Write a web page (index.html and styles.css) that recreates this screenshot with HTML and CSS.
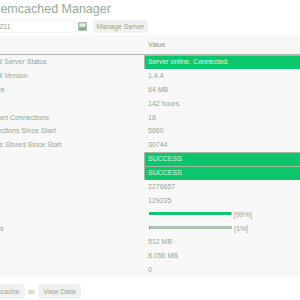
FILE: index.html
```html
<!DOCTYPE html>
<html lang="en">
<head>
  <meta charset="UTF-8">
  <title>Memcached Manager</title>
  <link rel="stylesheet" href="styles.css">
</head>
<body>
  <div class="page">
    <!-- Header -->
    <h1 class="title">Memcached Manager</h1>
    <form class="server-bar">
      <input class="server-input" type="text" value="127.0.0.1:11211">
      <span class="server-icon">
        <svg width="9" height="9" viewBox="0 0 9 9">
          <rect x="0" y="0" width="9" height="9" rx="1" fill="#a3c0a8"/>
          <rect x="1.5" y="1.5" width="6" height="3" fill="#e9f1eb"/>
          <rect x="1.5" y="6" width="6" height="1.5" fill="#7e9e85"/>
        </svg>
      </span>
      <button type="button" class="btn">Manage Server</button>
    </form>
    <!-- Stats table -->
    <table class="stats">
      <thead>
        <tr><th class="label"></th><th class="value">Value</th></tr>
      </thead>
      <tbody>
        <tr><td class="label">Full Server Status</td><td class="value ok">Server online. Connected.</td></tr>
        <tr><td class="label">Full Version</td><td class="value">1.4.4</td></tr>
        <tr><td class="label">Size</td><td class="value">64 MB</td></tr>
        <tr><td class="label">Up</td><td class="value">142 hours</td></tr>
        <tr><td class="label">Open Connections</td><td class="value">18</td></tr>
        <tr><td class="label">Elections Since Start</td><td class="value">5660</td></tr>
        <tr><td class="label">Hits Stored Since Start</td><td class="value">30744</td></tr>
        <tr><td class="label"></td><td class="value ok">SUCCESS</td></tr>
        <tr><td class="label"></td><td class="value ok">SUCCESS</td></tr>
        <tr><td class="label"></td><td class="value">2276657</td></tr>
        <tr><td class="label"></td><td class="value">129235</td></tr>
        <tr><td class="label">Hit</td><td class="value"><span class="bar hit"><span class="bar-fill" style="width: 99%"></span></span>[99%]</td></tr>
        <tr><td class="label">Ops</td><td class="value"><span class="bar"><span class="bar-fill" style="width: 1%"></span></span>[1%]</td></tr>
        <tr><td class="label"></td><td class="value">512 MB</td></tr>
        <tr><td class="label"></td><td class="value">8.056 MB</td></tr>
        <tr><td class="label"></td><td class="value">0</td></tr>
      </tbody>
    </table>
    <!-- Actions -->
    <div class="actions">
      <button type="button" class="btn">Flush Memcache</button>
      <span class="or">or</span>
      <button type="button" class="btn">View Data</button>
    </div>
  </div>
</body>
</html>
```

FILE: styles.css
```css
/* Reset */
* {
  margin: 0;
  padding: 0;
  box-sizing: border-box;
}
body {
  font-family: 'Liberation Sans', Arial, sans-serif;
  background: #fff;
  color: #8fa893;
  overflow: hidden;
}
.page {
  margin-left: -50px;
  width: 368px;
}
/* Header */
.title {
  height: 17px;
  padding: 1px 0 0 40px;
  font-size: 12.5px;
  font-weight: normal;
  line-height: 16px;
  color: #93ab97;
}
.server-bar {
  display: flex;
  align-items: center;
  height: 13px;
  margin-top: 3px;
}
.server-input {
  width: 126px;
  height: 13px;
  padding: 0 0 0 10px;
  border: 1px solid #f6f6f6;
  background: #fff;
  font-family: inherit;
  font-size: 7px;
  color: #8fa893;
  outline: none;
}
.server-icon {
  display: block;
  width: 9px;
  height: 9px;
  margin-left: 2px;
}
.server-icon svg {
  display: block;
}
.btn {
  height: 13px;
  padding: 0 3.5px;
  border: none;
  border-radius: 4px;
  background: #f1f1f1;
  font-family: inherit;
  font-size: 7px;
  line-height: 13px;
  color: #8fa893;
}
.server-bar .btn {
  margin-left: 6px;
}
/* Stats table */
.stats {
  width: 330px;
  margin: 2px 0 0 38px;
  table-layout: fixed;
  border-collapse: separate;
  border-spacing: 0;
  background: #f8f8f8;
  font-size: 7px;
}
.stats th {
  height: 20px;
  padding: 0 3px;
  border-bottom: 1px solid #a9bcab;
  text-align: left;
  font-weight: normal;
  color: #88a08c;
}
.stats th.label, .stats td.label {
  width: 156px;
}
.stats td {
  padding: 0 3px;
  border-top: 1px solid transparent;
  line-height: 12.87px;
  white-space: nowrap;
  overflow: hidden;
}
.stats .value {
  border-left: 1px solid transparent;
}
.stats td.ok {
  background: #0bc66b;
  color: #e4efe7;
  border-top-color: #a9b8ab;
  border-left-color: #a9b8ab;
}
/* Percentage bars */
.bar {
  display: inline-block;
  vertical-align: middle;
  width: 83px;
  height: 3px;
  margin: -2px 2px 0 1px;
  background: #a9c6ae;
}
.bar.hit {
  box-shadow: 0 0 0 1px #fff;
}
.bar-fill {
  display: block;
  height: 100%;
  background: #0bc66b;
}
/* Bottom actions */
.actions {
  display: flex;
  align-items: center;
  gap: 3px;
  margin-top: 7px;
  padding-left: 10px;
  font-size: 7px;
}
.actions .btn {
  height: 15px;
  padding: 0 6px;
  line-height: 15px;
}
```
